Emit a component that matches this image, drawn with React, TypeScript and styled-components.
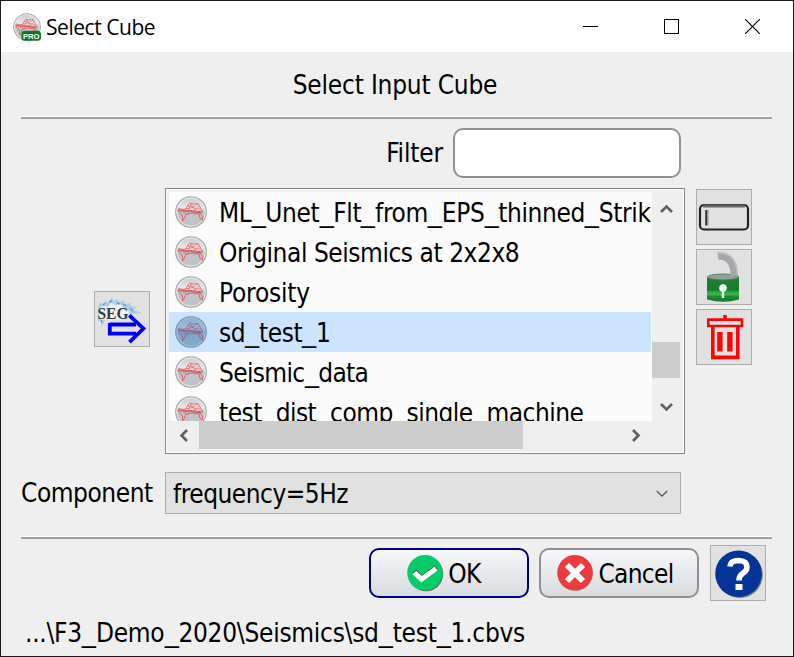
import React from "react";
import styled, { createGlobalStyle } from "styled-components";

const GlobalStyle = createGlobalStyle`
  * { box-sizing: border-box; }
  body { margin: 0; overflow: hidden; }
  svg { display: block; flex: none; }
`;

const Window = styled.main`
  display: flex;
  flex-direction: column;
  width: 794px;
  height: 657px;
  border: 1px solid #1b181b;
  background: #efefef;
  color: #000;
  font: 26px/40px "DejaVu Sans Condensed", "DejaVu Sans", sans-serif;
  font-stretch: condensed;
  letter-spacing: -0.45px;
  white-space: nowrap;
`;

const TitleBar = styled.header`
  display: flex;
  align-items: center;
  height: 51px;
  flex: none;
  padding-left: 12px;
  background: #fff;
`;

const WindowTitle = styled.h1`
  flex: 1;
  margin: 0 0 0 5px;
  font: 400 21px/50px "Open Sans", "Noto Sans", sans-serif;
  letter-spacing: -0.45px;
`;

const WindowButton = styled.button`
  display: grid;
  place-items: center;
  width: 81px;
  height: 51px;
  padding: 0;
  border: 0;
  background: none;
`;

const Content = styled.div`
  display: flex;
  flex-direction: column;
  padding: 0 21px 0 20px;
`;

const Heading = styled.h2`
  height: 64px;
  margin: 0;
  padding: 13px 3px 0 0;
  font: inherit;
  text-align: center;
  letter-spacing: -0.2px;
`;

const Separator = styled.hr`
  width: 100%;
  height: 3px;
  flex: none;
  margin: 0;
  border: 0;
  border-top: 1px solid #fff;
  background: #a0a0a0;
`;

const FilterRow = styled.label`
  display: flex;
  align-items: center;
  justify-content: flex-end;
  gap: 10px;
  margin: 9px 91px 0 0;
  letter-spacing: -0.15px;
`;

const FilterInput = styled.input`
  width: 228px;
  height: 50px;
  padding: 0 8px;
  border: 2px solid #909090;
  border-radius: 10px;
  background: #fff;
  font: inherit;
  outline: none;
`;

const ListArea = styled.section`
  display: flex;
  align-items: flex-start;
  margin-top: 10px;
  padding-left: 73px;
`;

const ToolButton = styled.button`
  display: grid;
  place-items: center;
  width: 56px;
  height: 56px;
  flex: none;
  padding: 0;
  border: 1px solid #adadad;
  background: #e1e1e1;
`;

const ImportSlot = styled.div`
  margin: 103px 15px 0 0;
`;

const ToolColumn = styled.div`
  display: flex;
  flex-direction: column;
  gap: 4px;
  margin: 1px 0 0 11px;
`;

const ListFrame = styled.div`
  display: grid;
  grid-template: 229px 28px / 483px 28px;
  width: 520px;
  height: 266px;
  padding: 3px;
  border: 1px solid #828790;
  box-shadow: inset 0 0 0 1px #fff;
`;

const List = styled.ul`
  height: 229px;
  margin: 0;
  padding: 0;
  overflow: hidden;
  list-style: none;
  background: #fbfbfb;
`;

const ListItem = styled.li<{ $selected?: boolean }>`
  display: flex;
  align-items: center;
  gap: 12px;
  width: 482px;
  height: 40px;
  padding-left: 6px;
  overflow: hidden;
  background: ${(p) => (p.$selected ? "#cce4fc" : "transparent")};
`;

const ItemText = styled.span<{ $spacing: number }>`
  padding-top: 2px;
  letter-spacing: ${(p) => p.$spacing}px;
`;

const WideUnderscore = styled.span`
  display: inline-block;
  margin: 0 1.3px;
  transform: scaleX(1.2);
`;

const VerticalBar = styled.div`
  display: flex;
  flex-direction: column;
  align-items: center;
  justify-content: space-between;
  padding: 2px 0 0;
`;

const HorizontalBar = styled.div`
  display: flex;
  align-items: center;
`;

const ArrowCell = styled.div`
  display: grid;
  place-items: center;
  width: 30px;
  height: 30px;
`;

const VerticalThumb = styled.div`
  width: 28px;
  height: 36px;
  margin: auto 0 13px;
  background: #cdcdcd;
`;

const HorizontalThumb = styled.div`
  width: 324px;
  height: 28px;
  flex: none;
  margin-right: 97px;
  background: #cdcdcd;
`;

const ComponentRow = styled.div`
  display: flex;
  align-items: center;
  height: 42px;
  margin: 18px 0 22px;
`;

const ComponentLabel = styled.span`
  width: 144px;
`;

const Combo = styled.div`
  display: flex;
  align-items: center;
  justify-content: space-between;
  width: 516px;
  height: 42px;
  padding: 2px 12px 0 7px;
  border: 1px solid #adadad;
  background: #e1e1e1;
  letter-spacing: -0.5px;
`;

const ButtonRow = styled.footer`
  display: flex;
  align-items: center;
  justify-content: flex-end;
  margin: 6px 6px 0 0;
`;

const PushButton = styled.button<{ $primary?: boolean }>`
  display: flex;
  align-items: center;
  justify-content: center;
  gap: 4px;
  width: 160px;
  height: 50px;
  margin-right: ${(p) => (p.$primary ? 10 : 11)}px;
  padding: 0 ${(p) => (p.$primary ? 11 : 8)}px 0 0;
  border: 2px solid ${(p) => (p.$primary ? "#000080" : "#8f8f91")};
  border-radius: 10px;
  background: linear-gradient(#f6f7fa, #dadbde);
  color: #000;
  font: inherit;
  letter-spacing: -0.7px;
`;

const ButtonText = styled.span`
  padding-top: 2px;
`;

const FilePath = styled.p`
  margin: 12px 0 0 4px;
  letter-spacing: -0.27px;
`;

function Label({ text }: { text: string }) {
  return (
    <>
      {text.split("_").map((part, i) => (
        <React.Fragment key={i}>
          {i > 0 && <WideUnderscore>_</WideUnderscore>}
          {part}
        </React.Fragment>
      ))}
    </>
  );
}

function Globe({ id, size, selected, pro }: { id: string; size: number; selected?: boolean; pro?: boolean }) {
  return (
    <svg width={size} height={size} viewBox="0 0 32 32">
      <defs>
        <linearGradient id={id} x1="0" y1="0" x2="0" y2="1">
          <stop offset="0" stopColor={selected ? "#8badce" : "#c8cacc"} />
          <stop offset=".36" stopColor={selected ? "#9bbcdb" : "#e8e9ea"} />
          <stop offset=".5" stopColor={selected ? "#7fa3c5" : "#c2c4c7"} />
          <stop offset="1" stopColor={selected ? "#82a9cd" : "#bfc2c5"} />
        </linearGradient>
      </defs>
      <circle cx="16" cy="16" r="15.3" fill={`url(#${id})`} stroke={selected ? "#6f93b3" : "#a0a2a4"} strokeWidth="1.1" />
      <circle cx="16" cy="16" r="14.2" fill="none" stroke={selected ? "#a3c3e0" : "#e9eaeb"} strokeWidth="1" />
      <g fill="none" stroke={selected ? "#a05578" : "#e4484d"} strokeLinejoin="round">
        <path d="M3 14.2 10 15 17 15 26 16.5" strokeWidth="1.8" opacity=".75" />
        <path d="M3 12.5 8 13.5 11 13 13 9 15 6.8 18 8 23 7.5 25.5 12 27.5 16 24 16 27.5 20 27.5 24 25 22.5 24 18 17 17 10.5 18.5 9.5 22 7.5 25 7.5 20 3 14.5" strokeWidth="1" opacity=".75" />
        <path d="M12.5 9.5 18 11 23 8M11 13 17 11.5 25 13M13 15 16 8 20 14 24 10M8 16 12 18 16 15 21 18 25 15" strokeWidth=".9" opacity=".6" />
      </g>
      {pro && (
        <>
          <rect x="9.6" y="20.2" width="22.4" height="11.6" rx="4" fill="#0c7a1c" />
          <text x="20.9" y="29.2" fill="#fff" fontFamily="Liberation Sans, sans-serif" fontWeight="700" fontSize="8.8" letterSpacing="0" textAnchor="middle">
            PRO
          </text>
        </>
      )}
    </svg>
  );
}

function Arrow({ turn }: { turn: number }) {
  return (
    <svg width="13" height="13" viewBox="0 0 13 13">
      <path d="M1 9 6.5 3.6 12 9" transform={`rotate(${turn} 6.5 6.5)`} fill="none" stroke="#606060" strokeWidth="2.7" />
    </svg>
  );
}

function SegyIcon() {
  return (
    <svg width="54" height="54" viewBox="0 0 54 54">
      <path
        d="M3 15 5 10 8 12 11 8 13 11 17 5 18 9 22 7 25 10 29 8 30 12 35 11 36 14 41 15 39 18 47 21 38 22 34 25H9L10 29 7 34 5 28 3 30Z"
        fill="#9cc8e2"
        opacity=".7"
      />
      <path d="M4 17 8 14 13 15 16 11 21 13 25 12 29 16 34 19 35 23 30 27 8 28 4 25Z" fill="#f0f4f7" opacity=".95" />
      <path d="M8 13 10 11M14 10 17 9M22 11 25 12M28 12 31 14M35 16 38 19M6 28 7 31" stroke="#5f9fc8" strokeWidth="1.4" />
      <text x="2.5" y="26.7" fill="#383838" fontFamily="Liberation Serif, serif" fontWeight="700" fontSize="17" textLength="31" lengthAdjust="spacingAndGlyphs">
        SEG
      </text>
      <path d="M14.5 32H38L33.5 24.5 35 22.5 50 36.5 36 50.5 34 49 39 42H14.5Z" fill="#e1e1e1" />
      <path d="M14.8 32.5H41M14.8 31V43.4M14.8 41.7H41M34.3 23.3 48.5 36.6 34.5 50.2" fill="none" stroke="#0000fa" strokeWidth="3.8" />
    </svg>
  );
}

const ITEMS = [
  { name: "ML_Unet_Flt_from_EPS_thinned_Strike", spacing: -0.39 },
  { name: "Original Seismics at 2x2x8", spacing: -0.45 },
  { name: "Porosity", spacing: -0.2 },
  { name: "sd_test_1", spacing: -0.45, selected: true },
  { name: "Seismic_data", spacing: -0.65 },
  { name: "test_dist_comp_single_machine", spacing: -0.52 },
];

export default function App() {
  return (
    <Window>
      <GlobalStyle />
      <TitleBar>
        <Globe id="app-globe" size={28} pro />
        <WindowTitle>Select Cube</WindowTitle>
        <WindowButton aria-label="Minimize">
          <svg width="15" height="15"><path d="M0 7.5H15" stroke="#000" /></svg>
        </WindowButton>
        <WindowButton aria-label="Maximize">
          <svg width="15" height="15"><rect x=".5" y=".5" width="14" height="14" fill="none" stroke="#000" /></svg>
        </WindowButton>
        <WindowButton aria-label="Close">
          <svg width="15" height="15"><path d="M0 0 15 15M15 0 0 15" stroke="#000" strokeWidth="1.1" /></svg>
        </WindowButton>
      </TitleBar>
      <Content>
        <Heading>Select Input Cube</Heading>
        <Separator />
        <FilterRow>
          Filter
          <FilterInput />
        </FilterRow>
        <ListArea>
          <ImportSlot>
            <ToolButton aria-label="Import SEG-Y"><SegyIcon /></ToolButton>
          </ImportSlot>
          <ListFrame>
            <List>
              {ITEMS.map((item, i) => (
                <ListItem key={item.name} $selected={item.selected}>
                  <Globe id={`globe-${i}`} size={32} selected={item.selected} />
                  <ItemText $spacing={item.spacing}><Label text={item.name} /></ItemText>
                </ListItem>
              ))}
            </List>
            <VerticalBar>
              <ArrowCell><Arrow turn={0} /></ArrowCell>
              <VerticalThumb />
              <ArrowCell><Arrow turn={180} /></ArrowCell>
            </VerticalBar>
            <HorizontalBar>
              <ArrowCell><Arrow turn={-90} /></ArrowCell>
              <HorizontalThumb />
              <ArrowCell><Arrow turn={90} /></ArrowCell>
            </HorizontalBar>
          </ListFrame>
          <ToolColumn>
            <ToolButton aria-label="Rename">
              <svg width="54" height="54" viewBox="0 0 54 54">
                <rect x="3" y="15" width="48" height="24.5" rx="4" fill="#e1e1e1" stroke="#222" strokeWidth="2.2" />
                <path d="M6 16H48" stroke="#666" strokeWidth="2.8" />
                <path d="M9.3 20V35.5" stroke="#333" strokeWidth="2.2" />
                <path d="M11 20V35.5" stroke="#999" strokeWidth="1.2" />
              </svg>
            </ToolButton>
            <ToolButton aria-label="Unlock">
              <svg width="54" height="54" viewBox="0 0 54 54">
                <defs>
                  <linearGradient id="lock" x1="0" y1="0" x2="0" y2="1">
                    <stop offset="0" stopColor="#238035" />
                    <stop offset=".52" stopColor="#1b7a2f" />
                    <stop offset=".6" stopColor="#2fa540" />
                    <stop offset=".7" stopColor="#3bb94a" />
                    <stop offset=".78" stopColor="#23893a" />
                    <stop offset="1" stopColor="#1a752d" />
                  </linearGradient>
                </defs>
                <path d="M10 27V49.5Q26 54 42 49.5V27Z" fill="url(#lock)" />
                <ellipse cx="26" cy="27" rx="15.5" ry="3" fill="#999ca2" stroke="#2f8641" strokeWidth=".8" />
                <path d="M21 6.2Q28 5 32.5 10T37.5 26" fill="none" stroke="#a6a7ac" strokeWidth="7.5" />
                <path d="M22 3.4Q31 3 35.5 8.5T40.5 25" fill="none" stroke="#bebfc3" strokeWidth="1.5" />
                <circle cx="26" cy="38" r="3.8" fill="#f5fff6" />
                <path d="M26 39V48" stroke="#e8f7e9" strokeWidth="2.4" />
              </svg>
            </ToolButton>
            <ToolButton aria-label="Delete">
              <svg width="54" height="54" viewBox="0 0 54 54">
                <g fill="none" stroke="#fb0508">
                  <path d="M11.3 9.6H45V16H11.3Z" strokeWidth="2.6" />
                  <path d="M15.8 16V47.4H40.8V16" strokeWidth="3.6" />
                  <path d="M22.9 22V41.5M32.9 22V41.5" strokeWidth="5.4" />
                  <path d="M28 5V9" strokeWidth="3.5" />
                </g>
              </svg>
            </ToolButton>
          </ToolColumn>
        </ListArea>
        <ComponentRow>
          <ComponentLabel>Component</ComponentLabel>
          <Combo>
            frequency=5Hz
            <svg width="12" height="8"><path d="M.8 1 6 6.2 11.2 1" fill="none" stroke="#505050" strokeWidth="1.3" /></svg>
          </Combo>
        </ComponentRow>
        <Separator />
        <ButtonRow>
          <PushButton $primary>
            <svg width="38" height="40" viewBox="0 0 38 40">
              <circle cx="20" cy="21" r="17.2" fill="#5a6260" />
              <circle cx="19" cy="19.8" r="17.8" fill="#05cb68" />
              <path d="M8.3 18 15.5 25.2 30 14.3" fill="none" stroke="#3d5548" strokeWidth="4.5" />
              <path d="M8.3 19.5 15.5 26.2 30 15.6" fill="none" stroke="#fff" strokeWidth="5" />
            </svg>
            <ButtonText>OK</ButtonText>
          </PushButton>
          <PushButton>
            <svg width="38" height="40" viewBox="0 0 38 40">
              <circle cx="19.7" cy="20.5" r="17.5" fill="#b5b5b9" />
              <circle cx="19" cy="19.8" r="17.8" fill="#ea3b3f" />
              <path d="M11 12 27 28M27 12 11 28" stroke="#fff" strokeWidth="6" />
            </svg>
            <ButtonText>Cancel</ButtonText>
          </PushButton>
          <ToolButton aria-label="Help">
            <svg width="54" height="54" viewBox="0 0 54 54">
              <circle cx="28.8" cy="29" r="23" fill="#77797d" />
              <circle cx="27.5" cy="27.7" r="23.3" fill="#053496" />
              <path d="M18.8 20.5Q19.5 14.5 27.5 14.5 36 14.7 36 21 36 25 31.5 27.5 28 30 28 34.5" fill="none" stroke="#fff" strokeWidth="5.5" />
              <path d="M24.5 38H31.5V44H24.5Z" fill="#fff" />
            </svg>
          </ToolButton>
        </ButtonRow>
        <FilePath><Label text={"...\\F3_Demo_2020\\Seismics\\sd_test_1.cbvs"} /></FilePath>
      </Content>
    </Window>
  );
}
